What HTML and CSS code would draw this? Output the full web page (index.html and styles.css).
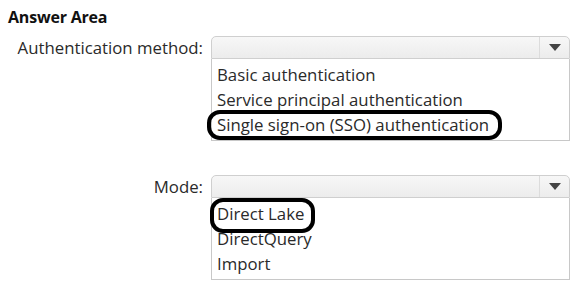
FILE: index.html
```html
<!DOCTYPE html>
<html>
<head>
<meta charset="utf-8">
<link rel="stylesheet" href="styles.css">
</head>
<body>
<div class="page">
  <div class="title">Answer Area</div>
  <div class="row first">
    <div class="label">Authentication method:</div>
    <div class="field">
      <div class="select"><span class="btn"><span class="tri"></span></span></div>
      <ul class="list">
        <li>Basic authentication</li>
        <li>Service principal authentication</li>
        <li><span class="mark mark-sso">Single sign-on (SSO) authentication</span></li>
      </ul>
    </div>
  </div>
  <div class="row second">
    <div class="label">Mode:</div>
    <div class="field">
      <div class="select"><span class="btn"><span class="tri"></span></span></div>
      <ul class="list">
        <li><span class="mark mark-dl">Direct Lake</span></li>
        <li>DirectQuery</li>
        <li>Import</li>
      </ul>
    </div>
  </div>
</div>
</body>
</html>
```
FILE: styles.css
```css
html, body { margin: 0; padding: 0; background: #fff; }
body { font-family: "Open Sans", "Liberation Sans", sans-serif; color: #222; }
.page { padding: 7px 0 0 8px; width: 574px; height: 285px; }
.title { font-weight: 700; font-size: 16px; line-height: 20px; color: #111; letter-spacing: -0.2px; }
.row { display: flex; align-items: flex-start; }
.row.first { margin-top: 9px; }
.row.second { margin-top: 34px; }
.label { width: 195px; text-align: right; font-size: 16.8px; line-height: 23px; color: #2a2a2a; }
.field { margin-left: 8px; width: 359px; }
.select { height: 21px; border: 1px solid #cfcfcf; border-radius: 5px 5px 0 0; background: linear-gradient(#f7f7f7, #ececec); display: flex; justify-content: flex-end; }
.btn { width: 29px; border-left: 1px solid #dcdcdc; display: flex; align-items: center; justify-content: center; }
.tri { width: 0; height: 0; border-left: 6px solid transparent; border-right: 6px solid transparent; border-top: 7px solid #444; }
.list { list-style: none; margin: 0; padding: 3px 0 3px 5px; border: 1px solid #c8c8c8; border-top: none; font-size: 16.8px; line-height: 25px; color: #2a2a2a; }
.list li { white-space: nowrap; height: 25px; }
.mark { position: relative; }
.mark::after { content: ""; position: absolute; border: 4px solid #000; border-radius: 13px; }
.mark-sso::after { left: -10px; right: -13px; top: -3px; bottom: -4px; }
.mark-dl::after { left: -7px; right: -11px; top: -4px; bottom: -8px; }
```
